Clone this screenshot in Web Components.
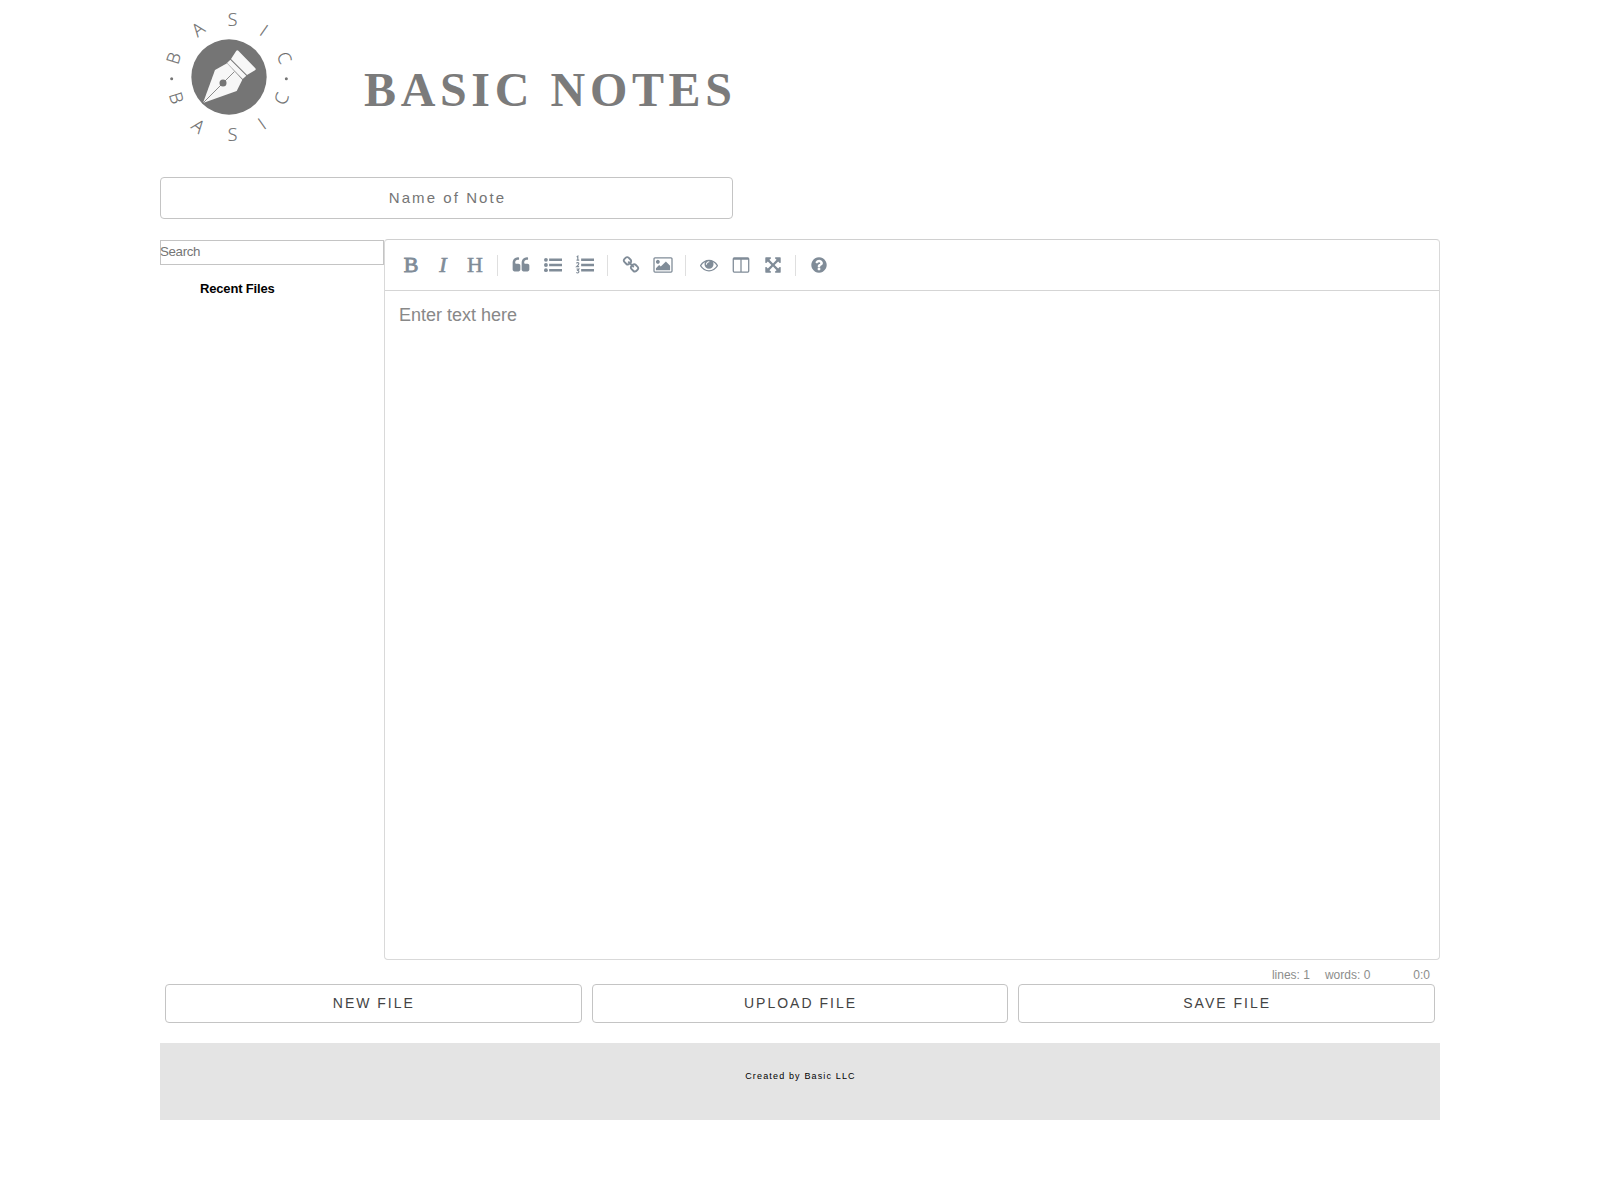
<!DOCTYPE html>
<html lang="en">
<head>
<meta charset="utf-8">
<title>Basic Notes</title>
<style>
body{margin:0;background:#fff;font-family:"Liberation Sans",Arial,sans-serif;color:#000}
</style>
</head>
<body>
<notes-app></notes-app>
<script>
const define = (name, html) => customElements.define(name, class extends HTMLElement {
  constructor() {
    super();
    const t = document.createElement('template');
    t.innerHTML = html;
    this.attachShadow({mode: 'open'}).append(t.content.cloneNode(true));
  }
});

define('notes-logo', `
<style>
:host{display:block;width:160px;height:150px}
svg{display:block}
text{font:300 53px "Open Sans",sans-serif;fill:#6a6a6a;text-anchor:middle;stroke:#6a6a6a;stroke-width:.6}
</style>
<svg width="160" height="150" viewBox="0 0 480 450">
<circle cx="237" cy="231" r="113" fill="#757575"/>
<g fill="#f7f7f7">
<path d="M159 309L195 210L231 190L277 239L260 273Z"/>
<path d="M231 189L241 179L289 227L278 237Z"/>
<path d="M243 177L259 152Q262 149 265 152L316 205Q319 208 315 211L291 225Z"/>
</g>
<path d="M159 309L253 215" stroke="#757575" stroke-width="2.5"/>
<circle cx="219" cy="249" r="10.5" fill="#757575"/>
<circle cx="65" cy="236" r="4.5" fill="#757575"/><circle cx="409" cy="236" r="4.5" fill="#757575"/>
<text transform="translate(71 174) rotate(-73)" y="19">B</text>
<text transform="translate(144 88) rotate(-38)" y="19">A</text>
<text transform="translate(248 59)" y="19">S</text>
<text transform="translate(342 91) rotate(35)" y="19">I</text>
<text transform="translate(403 173) rotate(68)" y="19">C</text>
<text transform="translate(79 294) rotate(73)" y="19">B</text>
<text transform="translate(145 378) rotate(38)" y="19">A</text>
<text transform="translate(248 403)" y="19">S</text>
<text transform="translate(336 371) rotate(-35)" y="19">I</text>
<text transform="translate(394 296) rotate(-70)" y="19">C</text>
</svg>`);

define('notes-header', `
<style>
:host{display:flex;height:177px;align-items:flex-start}
notes-logo{margin-left:-10px}
h1{margin:62px 0 0 54px;font:bold 48px/56px "Liberation Serif","Times New Roman",serif;letter-spacing:4.65px;color:#7b7b7b;white-space:nowrap}
</style>
<notes-logo></notes-logo><h1><slot></slot></h1>`);

define('note-name', `
<style>
:host{display:flex;box-sizing:border-box;width:573px;height:42px;padding:0 0 2px 2px;border:1px solid #c4c4c4;border-radius:4px;align-items:center;justify-content:center;font-size:15px;letter-spacing:2.07px;color:#757575}
</style><slot></slot>`);

define('side-panel', `
<style>
:host{display:block;width:224px;padding-top:1px;box-sizing:border-box}
.search{box-sizing:border-box;height:25px;border:1px solid #c4c4c4;font-size:13.33px;line-height:22px;color:#757575;letter-spacing:-.35px;text-indent:-1px}
h4{margin:16px 0 0 40px;font:bold 13px/16px "Liberation Sans",Arial,sans-serif;letter-spacing:-.16px}
</style>
<div class="search"><slot name="search"></slot></div><h4><slot></slot></h4>`);

const glyphs = {
  quote: '<path id="q" d="M832 960v384q0 80-56 136t-136 56h-384q-80 0-136-56t-56-136v-704q0-104 40.5-198.5t109.500-163.500 163.500-109.500 198.500-40.500h64q26 0 45 19t19 45v128q0 26-19 45t-45 19h-64q-106 0-181 75t-75 181v32q0 40 28 68t68 28h224q80 0 136 56t56 136z"/><use href="#q" x="896"/>',
  ul: '<circle cx="192" cy="384" r="192"/><circle cx="192" cy="896" r="192"/><circle cx="192" cy="1408" r="192"/><path d="M512 256h1280v250H512zM512 770h1280v250H512zM512 1284h1280v250H512z"/>',
  ol: '<path d="M512 256h1280v250H512zM512 770h1280v250H512zM512 1284h1280v250H512z"/><path d="M70 100L180 20V400M50 410H320M50 740Q70 650 180 650Q290 660 280 770Q270 860 60 1060H310M50 1290H290L170 1430Q300 1450 290 1570Q270 1700 150 1690Q80 1690 40 1640" fill="none" stroke="currentColor" stroke-width="115"/>',
  link: '<path d="M1520 1216q0-40-28-68l-208-208q-28-28-68-28-42 0-72 32 3 3 19 18.500t21.500 21.500 15 19 13 25.500 3.500 27.500q0 40-28 68t-68 28q-15 0-27.500-3.500t-25.500-13-19-15-21.500-21.500-18.500-19q-33 31-33 73 0 40 28 68l206 207q27 27 68 27 40 0 68-26l147-146q28-28 28-67zm-703-705q0-40-28-68l-206-207q-28-28-68-28-39 0-68 27l-147 146q-28 28-28 67 0 40 28 68l208 208q27 27 68 27 42 0 72-31-3-3-19-18.500t-21.500-21.500-15-19-13-25.500-3.500-27.500q0-40 28-68t68-28q15 0 27.500 3.500t25.500 13 19 15 21.500 21.500 18.500 19q33-31 33-73zm895 705q0 120-85 203l-147 146q-83 83-203 83-121 0-204-85l-206-207q-83-83-83-203 0-123 88-209l-88-88q-86 88-208 88-120 0-204-84l-208-208q-84-84-84-204t85-203l147-146q83-83 203-83 121 0 204 85l206 207q83 83 83 203 0 123-88 209l88 88q86-88 208-88 120 0 204 84l208 208q84 84 84 204z"/>',
  image: '<path d="M576 576q0 80-56 136t-136 56-136-56-56-136 56-136 136-56 136 56 56 136zm1024 384v448h-1408v-192l320-320 160 160 512-512zm96-704h-1600q-13 0-22.500 9.500t-9.500 22.500v1216q0 13 9.500 22.500t22.500 9.500h1600q13 0 22.500-9.500t9.500-22.500v-1216q0-13-9.500-22.500t-22.500-9.500zm160 32v1216q0 66-47 113t-113 47h-1600q-66 0-113-47t-47-113v-1216q0-66 47-113t113-47h1600q66 0 113 47t47 113z"/>',
  eye: '<path d="M1664 960q-152-236-381-353 61 104 61 225 0 185-131.500 316.500t-316.500 131.500-316.500-131.500-131.500-316.500q0-121 61-225-229 117-381 353 133 205 333.500 326.500t434.500 121.500 434.500-121.500 333.500-326.500zm-720-384q0-20-14-34t-34-14q-125 0-214.500 89.500t-89.500 214.500q0 20 14 34t34 14 34-14 14-34q0-86 61-147t147-61q20 0 34-14t14-34zm848 384q0 34-20 69-140 230-376.500 368.500t-499.500 138.500-499.500-139-376.500-368q-20-35-20-69t20-69q140-229 376.500-368t499.500-139 499.500 139 376.500 368q20 35 20 69z"/>',
  columns: '<path fill-rule="evenodd" d="M224 128H1568Q1728 128 1728 288V1504Q1728 1664 1568 1664H224Q64 1664 64 1504V288Q64 128 224 128ZM192 384V1504Q192 1536 224 1536H832V384ZM960 384V1536H1568Q1600 1536 1600 1504V384Z"/>',
  expand: '<path d="M1411 541l-355 355 355 355 144-144q29-31 70-14 39 17 39 59v448q0 26-19 45t-45 19h-448q-42 0-59-40-17-39 14-69l144-144-355-355-355 355 144 144q31 30 14 69-17 40-59 40h-448q-26 0-45-19t-19-45v-448q0-42 40-59 39-17 69 14l144 144 355-355-355-355-144 144q-19 19-45 19-12 0-24-5-40-17-40-59v-448q0-26 19-45t45-19h448q42 0 59 40 17 39-14 69l-144 144 355 355 355-355-144-144q-31-30-14-69 17-40 59-40h448q26 0 45 19t19 45v448q0 42-39 59-13 5-25 5-26 0-45-19z"/>',
  help: '<path d="M1024 1376v-192q0-14-9-23t-23-9h-192q-14 0-23 9t-9 23v192q0 14 9 23t23 9h192q14 0 23-9t9-23zm256-672q0-88-55.500-163t-138.500-116-170-41q-243 0-371 213-15 24 8 42l132 100q7 6 19 6 16 0 25-12 53-68 86-92 34-24 86-24 48 0 85.500 26t37.500 59q0 38-20 61t-68 45q-63 28-115.500 86.500t-52.500 125.500v36q0 14 9 23t23 9h192q14 0 23-9t9-23q0-19 21.500-49.500t54.500-49.500q32-18 49-28.500t46-35 44.500-48 28-60.500 12.500-81zm384 192q0 209-103 385.500t-279.500 279.500-385.500 103-385.500-103-279.500-279.500-103-385.500 103-385.500 279.500-279.500 385.500-103 385.500 103 279.500 279.500 103 385.500z"/>'
};

customElements.define('tool-button', class extends HTMLElement {
  constructor() {
    super();
    this.attachShadow({mode: 'open'});
  }
  connectedCallback() {
    const icon = glyphs[this.getAttribute('icon')];
    this.shadowRoot.innerHTML = `
<style>
:host{display:flex;width:30px;height:30px;align-items:center;justify-content:center;color:#808c98;font:22px/30px "Liberation Serif",serif;-webkit-text-stroke:.5px #808c98}
:host([strong]){-webkit-text-stroke:.9px #808c98}
:host([slant]){font-style:italic;-webkit-text-stroke:.7px #808c98}
svg{display:block;overflow:visible;fill:currentColor}
</style>` + (icon ? `<svg width="18" height="18" viewBox="0 0 1792 1792">${icon}</svg>` : '<slot></slot>');
  }
});

define('tool-divider', `<style>:host{display:block;width:1px;height:21px;margin:0 6px 0 5px;background:#dfdfdf}</style>`);

define('editor-toolbar', `
<style>
:host{display:flex;box-sizing:border-box;height:51px;padding:0 11px;gap:2px;align-items:center;border-bottom:1px solid #d5d5d5}
</style>
<tool-button strong>B</tool-button><tool-button slant>I</tool-button><tool-button>H</tool-button>
<tool-divider></tool-divider>
<tool-button icon="quote"></tool-button><tool-button icon="ul"></tool-button><tool-button icon="ol"></tool-button>
<tool-divider></tool-divider>
<tool-button icon="link"></tool-button><tool-button icon="image"></tool-button>
<tool-divider></tool-divider>
<tool-button icon="eye"></tool-button><tool-button icon="columns"></tool-button><tool-button icon="expand"></tool-button>
<tool-divider></tool-divider>
<tool-button icon="help"></tool-button>`);

define('note-editor', `
<style>
:host{display:block;flex:1}
.box{box-sizing:border-box;height:721px;border:1px solid #d9d9d9;border-top-color:#d0d0d0;border-radius:4px}
.text{padding:13px 14px;font-size:18px;line-height:22px;color:#888}
.status{display:flex;justify-content:flex-end;height:24px;padding:7px 10px 0 0;box-sizing:border-box;font-size:12px;line-height:16px;color:#8c8d8b}
.status span:nth-child(2){margin-left:15px}
.status span:nth-child(3){margin-left:43px}
</style>
<div class="box"><editor-toolbar></editor-toolbar><div class="text"><slot></slot></div></div>
<div class="status"><span>lines: 1</span><span>words: 0</span><span>0:0</span></div>`);

define('file-button', `
<style>
:host{display:flex;flex:1;box-sizing:border-box;height:39px;padding:0 0 2px 1px;border:1px solid #c4c4c4;border-radius:4px;align-items:center;justify-content:center;font-size:14px;letter-spacing:2px;color:#444}
</style><slot></slot>`);

define('notes-footer', `
<style>
:host{display:block;height:77px;margin-top:20px;padding:25px 0 0 1px;box-sizing:border-box;background:#e4e4e4;text-align:center;font-size:9px;line-height:16px;letter-spacing:1.15px}
</style><slot></slot>`);

define('notes-app', `
<style>
:host{display:block;width:1280px;margin:0 auto}
.work{display:flex;margin-top:20px}
.files{display:flex;gap:10px;padding:0 5px}
</style>
<notes-header>BASIC NOTES</notes-header>
<note-name>Name of Note</note-name>
<div class="work">
<side-panel><span slot="search">Search</span>Recent Files</side-panel>
<note-editor>Enter text here</note-editor>
</div>
<div class="files"><file-button>NEW FILE</file-button><file-button>UPLOAD FILE</file-button><file-button>SAVE FILE</file-button></div>
<notes-footer>Created by Basic LLC</notes-footer>`);
</script>
</body>
</html>
